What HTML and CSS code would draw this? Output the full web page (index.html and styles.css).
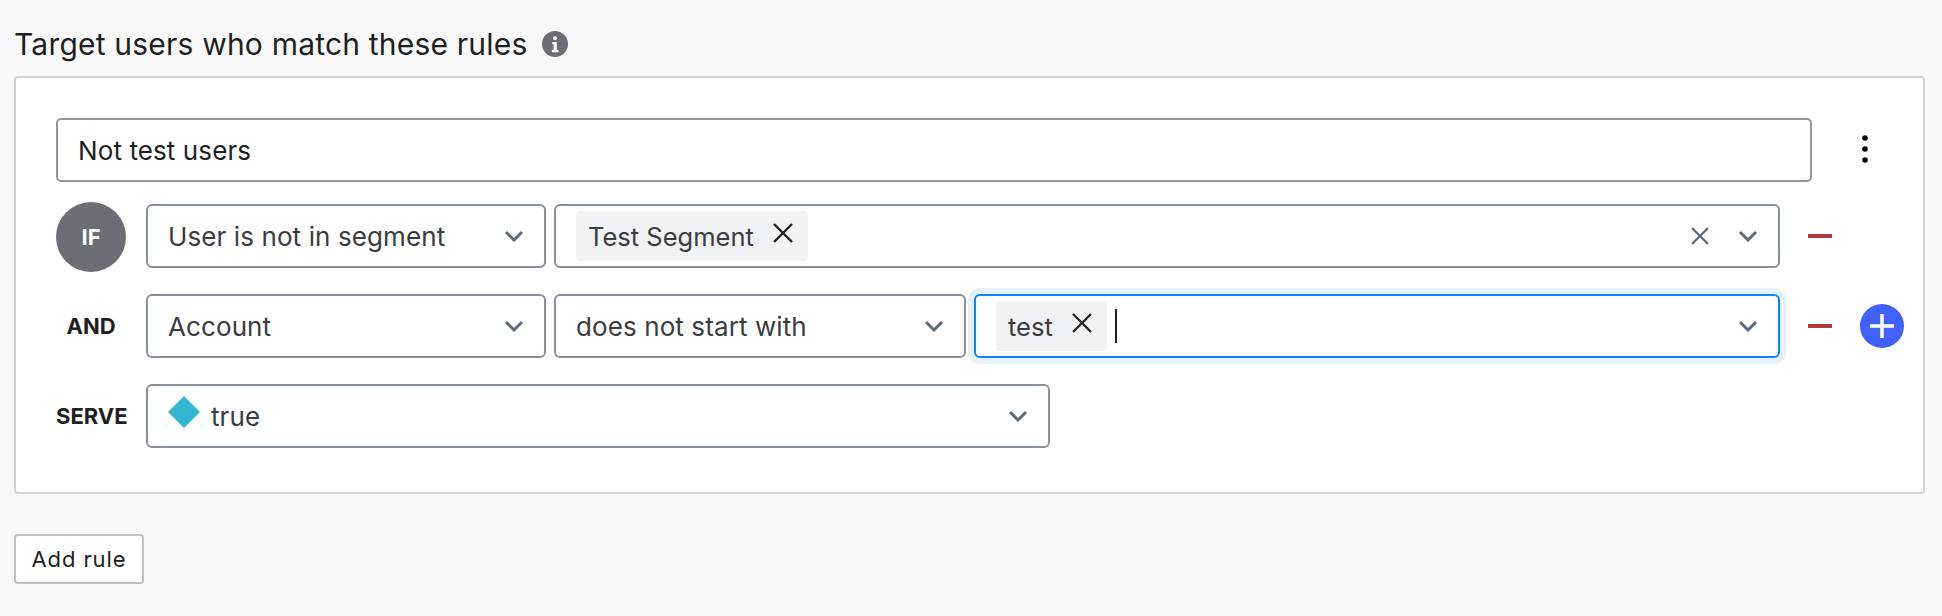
FILE: index.html
```html
<!DOCTYPE html>
<html lang="en">
<head>
    <meta charset="UTF-8">
    <meta name="viewport" content="width=device-width, initial-scale=1.0">
    <title>Target users</title>
    <link rel="stylesheet" href="styles.css">
</head>
<body>
    <div class="heading">
        <h2>Target users who match these rules</h2>
        <svg class="info" viewBox="0 0 26 26"><circle cx="13" cy="13" r="13" fill="#6d6e73"/><circle cx="13" cy="7.2" r="2" fill="#fff"/><path d="M10.2 11h4.6v8h1.6v2.2H9.8V19h1.8v-5.8h-1.4z" fill="#fff"/></svg>
    </div>

    <div class="card">
        <div class="name-row">
            <div class="name-input">Not test users</div>
            <svg class="more" viewBox="0 0 6 28"><circle cx="3" cy="3" r="2.8"/><circle cx="3" cy="14" r="2.8"/><circle cx="3" cy="25" r="2.8"/></svg>
        </div>

        <!-- IF row -->
        <div class="row row-if">
            <div class="label"><span class="if-badge">IF</span></div>
            <div class="select w-attr">
                <span class="value">User is not in segment</span>
                <svg class="chevron" viewBox="0 0 20 12"><path d="M2 2l8 8 8-8"/></svg>
            </div>
            <div class="select grow">
                <span class="tag">Test Segment
                    <svg class="tag-x" viewBox="0 0 22 22"><path d="M2 2l18 18M20 2L2 20"/></svg>
                </span>
                <span class="spacer"></span>
                <svg class="clear" viewBox="0 0 20 20"><path d="M2 2l16 16M18 2L2 18"/></svg>
                <svg class="chevron" viewBox="0 0 20 12"><path d="M2 2l8 8 8-8"/></svg>
            </div>
            <span class="minus"></span>
        </div>

        <!-- AND row -->
        <div class="row">
            <div class="label">AND</div>
            <div class="select w-attr">
                <span class="value">Account</span>
                <svg class="chevron" viewBox="0 0 20 12"><path d="M2 2l8 8 8-8"/></svg>
            </div>
            <div class="select w-op">
                <span class="value">does not start with</span>
                <svg class="chevron" viewBox="0 0 20 12"><path d="M2 2l8 8 8-8"/></svg>
            </div>
            <div class="select grow focused">
                <span class="tag">test
                    <svg class="tag-x" viewBox="0 0 22 22"><path d="M2 2l18 18M20 2L2 20"/></svg>
                </span>
                <span class="cursor"></span>
                <span class="spacer"></span>
                <svg class="chevron" viewBox="0 0 20 12"><path d="M2 2l8 8 8-8"/></svg>
            </div>
            <span class="minus"></span>
            <svg class="plus" viewBox="0 0 44 44"><circle cx="22" cy="22" r="22" fill="#4060ff"/><path d="M22 10v24M10 22h24" stroke="#fff" stroke-width="3.5"/></svg>
        </div>

        <!-- SERVE row -->
        <div class="row">
            <div class="label">SERVE</div>
            <div class="select w-serve">
                <svg class="diamond" viewBox="0 0 32 32"><path d="M16 0l16 16-16 16L0 16z"/></svg>
                <span class="value">true</span>
                <svg class="chevron" viewBox="0 0 20 12"><path d="M2 2l8 8 8-8"/></svg>
            </div>
        </div>
    </div>

    <button class="add-rule">Add rule</button>
</body>
</html>
```

FILE: styles.css
```css
body {
    margin: 0;
    padding: 0 17px 0 14px;
    background-color: #f8f8f8;
    color: #1f1f21;
    font-family: Inter, "Liberation Sans", sans-serif;
    font-size: 26px;
    letter-spacing: 0.1px;
}
.heading {
    display: flex;
    align-items: center;
    height: 40px;
    padding-top: 24px;
    margin-bottom: 12px;
}
h2 {
    margin: 0;
    font-size: 30px;
    font-weight: 400;
    letter-spacing: 0.2px;
}
.info {
    width: 26px;
    height: 26px;
    margin-left: 14px;
}
.card {
    box-sizing: border-box;
    height: 418px;
    padding: 40px 19px 0 40px;
    background-color: #fff;
    border: 2px solid #d2d3d4;
    border-radius: 4px;
}
.name-row {
    display: flex;
    align-items: center;
    margin-bottom: 20px;
}
.name-input {
    box-sizing: border-box;
    display: flex;
    align-items: center;
    width: 1756px;
    height: 64px;
    padding: 0 20px;
    border: 2px solid #939598;
    border-radius: 5px;
}
.more {
    width: 6px;
    height: 28px;
    margin-left: 50px;
    margin-top: -2px;
}
.row {
    display: flex;
    align-items: center;
    height: 64px;
    margin-bottom: 26px;
}
.row-if {
    height: 70px;
    margin-bottom: 22px;
    padding-right: 72px;
    align-items: flex-start;
}
.row-if .select {
    margin-top: 2px;
}
.row-if .minus {
    margin-top: 32px;
}
.label {
    flex: none;
    width: 70px;
    margin-right: 20px;
    text-align: center;
    font-size: 22px;
    font-weight: 700;
    letter-spacing: 0;
}
.if-badge {
    display: flex;
    align-items: center;
    justify-content: center;
    width: 70px;
    height: 70px;
    border-radius: 50%;
    background-color: #6d6e73;
    color: #fff;
}
.select {
    box-sizing: border-box;
    flex: none;
    display: flex;
    align-items: center;
    height: 64px;
    margin-right: 8px;
    padding: 0 20px;
    background-color: #fff;
    border: 2px solid #87909b;
    border-radius: 6px;
    color: #3b3c40;
}
.w-attr { width: 400px; }
.w-op { width: 412px; }
.w-serve { width: 904px; }
.grow { flex: 1; margin-right: 0; }
.value { flex: 1; }
.spacer { flex: 1; }
.chevron {
    width: 20px;
    height: 12px;
    fill: none;
    stroke: #5f6b76;
    stroke-width: 3;
}
.clear {
    width: 20px;
    height: 20px;
    margin-right: 28px;
    fill: none;
    stroke: #5f6b76;
    stroke-width: 2.4;
}
.tag {
    display: flex;
    align-items: center;
    height: 50px;
    padding: 0 14px 0 12px;
    background-color: #f1f2f4;
    border-radius: 4px;
    font-size: 25.5px;
    letter-spacing: 0;
}
.tag-x {
    width: 22px;
    height: 22px;
    margin-left: 18px;
    margin-top: -6px;
    fill: none;
    stroke: #222;
    stroke-width: 2.4;
}
.focused {
    margin-right: 0;
    border-color: #0a84ff;
    box-shadow: 0 0 0 6px #e7f1fd;
}
.cursor {
    width: 2px;
    height: 34px;
    margin-left: 8px;
    background-color: #222;
}
.diamond {
    width: 32px;
    height: 32px;
    margin-right: 11px;
    margin-top: -8px;
    fill: #33b5d0;
}
.minus {
    flex: none;
    width: 24px;
    height: 4px;
    margin-left: 28px;
    background-color: #b33a3a;
}
.plus {
    width: 44px;
    height: 44px;
    margin-left: 28px;
}
.add-rule {
    display: block;
    box-sizing: border-box;
    width: 130px;
    height: 50px;
    margin-top: 40px;
    padding: 0;
    background-color: #fff;
    border: 2px solid #bfc0c2;
    border-radius: 4px;
    color: #1f1f21;
    font-family: inherit;
    font-size: 22px;
    letter-spacing: 0.9px;
}
```
